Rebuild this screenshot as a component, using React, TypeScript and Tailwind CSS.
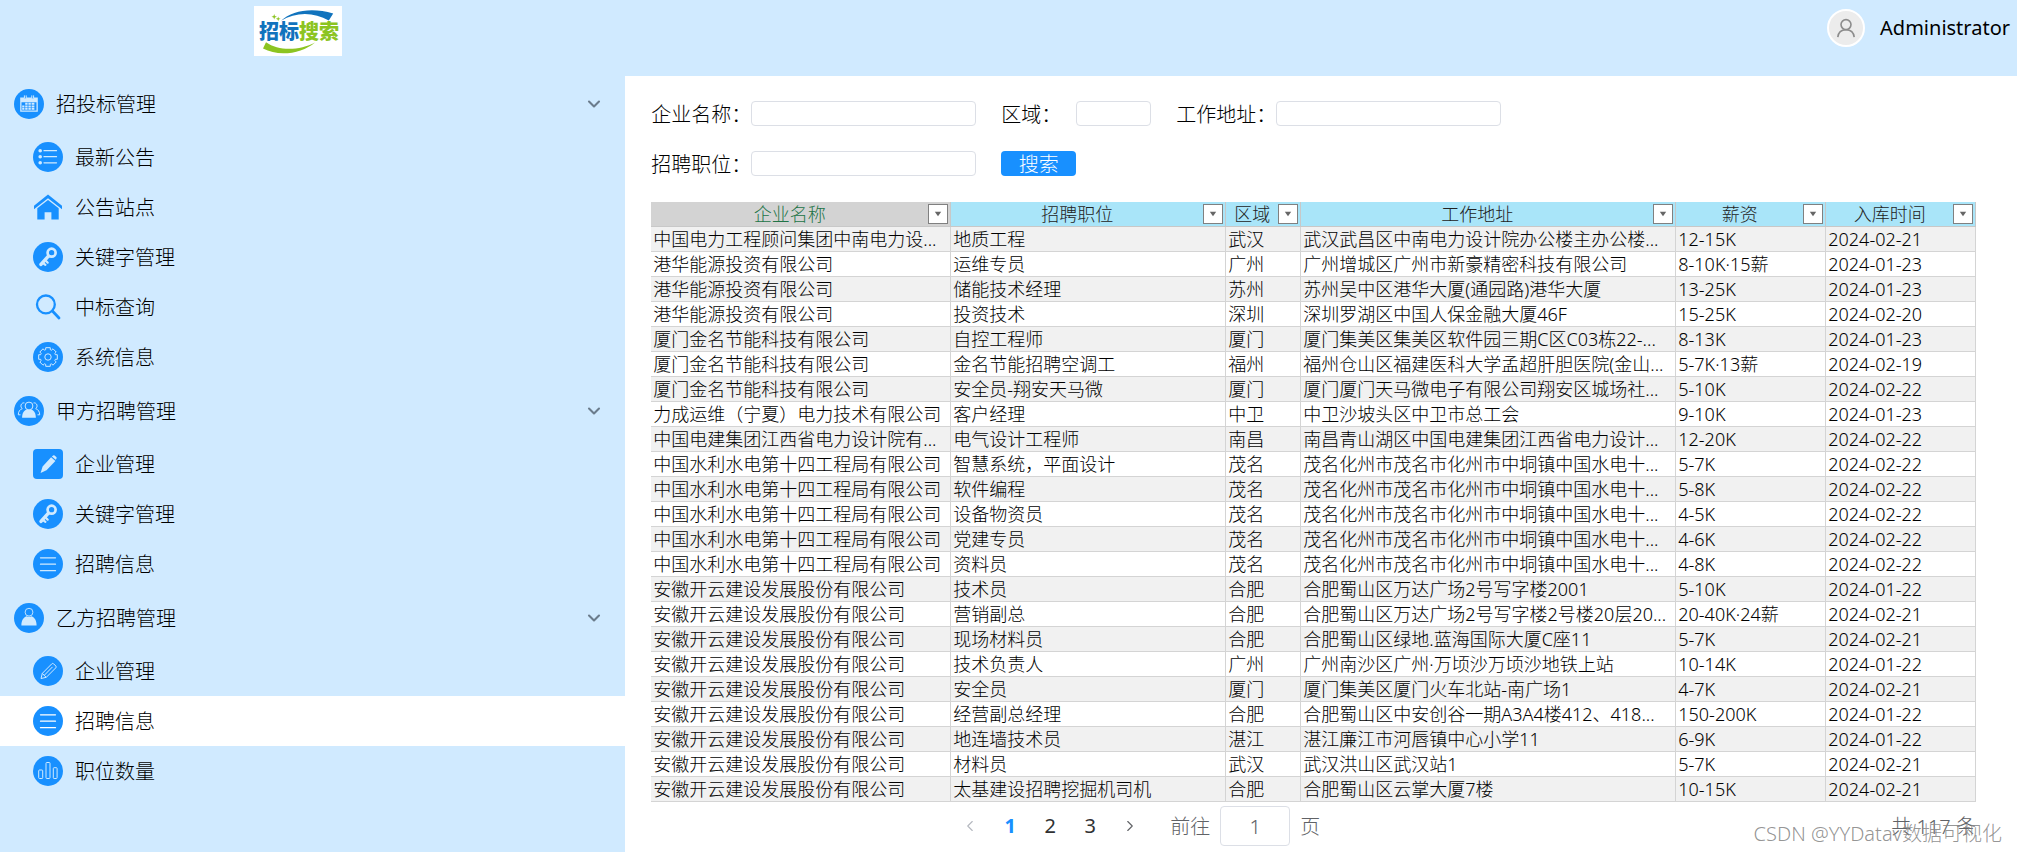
import { useState } from 'react'
import { ChevronDown, ChevronLeft, ChevronRight } from 'lucide-react'
import clsx from 'clsx'

type IconName =
  | 'calendar'
  | 'list'
  | 'home'
  | 'key'
  | 'search'
  | 'gear'
  | 'group'
  | 'edit'
  | 'lines'
  | 'user'
  | 'pencil'
  | 'chart'

interface MenuEntry {
  id: string
  label: string
  icon: IconName
}

interface MenuGroup extends MenuEntry {
  items: MenuEntry[]
}

const MENU: MenuGroup[] = [
  {
    id: 'bidding',
    label: '招投标管理',
    icon: 'calendar',
    items: [
      { id: 'notice', label: '最新公告', icon: 'list' },
      { id: 'site', label: '公告站点', icon: 'home' },
      { id: 'keyword', label: '关键字管理', icon: 'key' },
      { id: 'winner', label: '中标查询', icon: 'search' },
      { id: 'system', label: '系统信息', icon: 'gear' },
    ],
  },
  {
    id: 'party-a',
    label: '甲方招聘管理',
    icon: 'group',
    items: [
      { id: 'a-company', label: '企业管理', icon: 'edit' },
      { id: 'a-keyword', label: '关键字管理', icon: 'key' },
      { id: 'a-jobs', label: '招聘信息', icon: 'lines' },
    ],
  },
  {
    id: 'party-b',
    label: '乙方招聘管理',
    icon: 'user',
    items: [
      { id: 'b-company', label: '企业管理', icon: 'pencil' },
      { id: 'b-jobs', label: '招聘信息', icon: 'lines' },
      { id: 'b-count', label: '职位数量', icon: 'chart' },
    ],
  },
]

const COLUMNS = [
  { label: '企业名称', width: 'w-[300px]' },
  { label: '招聘职位', width: 'w-[275px]' },
  { label: '区域', width: 'w-[75px]' },
  { label: '工作地址', width: 'w-[375px]' },
  { label: '薪资', width: 'w-[150px]' },
  { label: '入库时间', width: 'w-[150px]' },
]

const ROWS = [
  ['中国电力工程顾问集团中南电力设...', '地质工程', '武汉', '武汉武昌区中南电力设计院办公楼主办公楼...', '12-15K', '2024-02-21'],
  ['港华能源投资有限公司', '运维专员', '广州', '广州增城区广州市新豪精密科技有限公司', '8-10K·15薪', '2024-01-23'],
  ['港华能源投资有限公司', '储能技术经理', '苏州', '苏州吴中区港华大厦(通园路)港华大厦', '13-25K', '2024-01-23'],
  ['港华能源投资有限公司', '投资技术', '深圳', '深圳罗湖区中国人保金融大厦46F', '15-25K', '2024-02-20'],
  ['厦门金名节能科技有限公司', '自控工程师', '厦门', '厦门集美区集美区软件园三期C区C03栋22-...', '8-13K', '2024-01-23'],
  ['厦门金名节能科技有限公司', '金名节能招聘空调工', '福州', '福州仓山区福建医科大学孟超肝胆医院(金山...', '5-7K·13薪', '2024-02-19'],
  ['厦门金名节能科技有限公司', '安全员-翔安天马微', '厦门', '厦门厦门天马微电子有限公司翔安区城场社...', '5-10K', '2024-02-22'],
  ['力成运维（宁夏）电力技术有限公司', '客户经理', '中卫', '中卫沙坡头区中卫市总工会', '9-10K', '2024-01-23'],
  ['中国电建集团江西省电力设计院有...', '电气设计工程师', '南昌', '南昌青山湖区中国电建集团江西省电力设计...', '12-20K', '2024-02-22'],
  ['中国水利水电第十四工程局有限公司', '智慧系统，平面设计', '茂名', '茂名化州市茂名市化州市中垌镇中国水电十...', '5-7K', '2024-02-22'],
  ['中国水利水电第十四工程局有限公司', '软件编程', '茂名', '茂名化州市茂名市化州市中垌镇中国水电十...', '5-8K', '2024-02-22'],
  ['中国水利水电第十四工程局有限公司', '设备物资员', '茂名', '茂名化州市茂名市化州市中垌镇中国水电十...', '4-5K', '2024-02-22'],
  ['中国水利水电第十四工程局有限公司', '党建专员', '茂名', '茂名化州市茂名市化州市中垌镇中国水电十...', '4-6K', '2024-02-22'],
  ['中国水利水电第十四工程局有限公司', '资料员', '茂名', '茂名化州市茂名市化州市中垌镇中国水电十...', '4-8K', '2024-02-22'],
  ['安徽开云建设发展股份有限公司', '技术员', '合肥', '合肥蜀山区万达广场2号写字楼2001', '5-10K', '2024-01-22'],
  ['安徽开云建设发展股份有限公司', '营销副总', '合肥', '合肥蜀山区万达广场2号写字楼2号楼20层20...', '20-40K·24薪', '2024-02-21'],
  ['安徽开云建设发展股份有限公司', '现场材料员', '合肥', '合肥蜀山区绿地.蓝海国际大厦C座11', '5-7K', '2024-02-21'],
  ['安徽开云建设发展股份有限公司', '技术负责人', '广州', '广州南沙区广州·万顷沙万顷沙地铁上站', '10-14K', '2024-01-22'],
  ['安徽开云建设发展股份有限公司', '安全员', '厦门', '厦门集美区厦门火车北站-南广场1', '4-7K', '2024-02-21'],
  ['安徽开云建设发展股份有限公司', '经营副总经理', '合肥', '合肥蜀山区中安创谷一期A3A4楼412、418...', '150-200K', '2024-01-22'],
  ['安徽开云建设发展股份有限公司', '地连墙技术员', '湛江', '湛江廉江市河唇镇中心小学11', '6-9K', '2024-01-22'],
  ['安徽开云建设发展股份有限公司', '材料员', '武汉', '武汉洪山区武汉站1', '5-7K', '2024-02-21'],
  ['安徽开云建设发展股份有限公司', '太基建设招聘挖掘机司机', '合肥', '合肥蜀山区云掌大厦7楼', '10-15K', '2024-02-21'],
]

// Outline of a cog with eight rounded teeth, centred in a 30x30 box
function gearPath() {
  const points: string[] = []
  for (let i = 0; i < 8; i++) {
    const base = (i * Math.PI) / 4
    const steps: [number, number][] = [
      [-0.24, 9.6],
      [0.24, 9.6],
      [0.3, 7.7],
      [0.48, 7.7],
    ]
    steps.forEach(([offset, r]) => {
      const x = 15 + r * Math.sin(base + offset)
      const y = 15 - r * Math.cos(base + offset)
      points.push(`${x.toFixed(2)} ${y.toFixed(2)}`)
    })
  }
  return `M${points.join('L')}Z`
}

function Glyph({ name }: { name: IconName }) {
  switch (name) {
    case 'calendar':
      return (
        <>
          <path
            fillRule="evenodd"
            fill="currentColor"
            d="M6.2 8.6h17.6v14.2H6.2zM7.5 13.2v8.3h15v-8.3z"
          />
          <path d="M10.4 6.4v2.8q.9 1.2 1.8 0V6.4M17.8 6.4v2.8q.9 1.2 1.8 0V6.4" fill="#1890ff" stroke="currentColor" />
          <path
            fill="currentColor"
            d="M11.2 13.8h2.4v2h-2.4zM14.4 13.8h2.4v2h-2.4zM17.6 13.8h2.8v2h-2.8zM8.2 16.4h2.2v2H8.2zM11.2 16.4h2.4v2h-2.4zM14.4 16.4h2.4v2h-2.4zM17.6 16.4h2.8v2h-2.8zM8.2 19h2.2v1.8H8.2zM11.2 19h2.4v1.8h-2.4zM14.4 19h2.4v1.8h-2.4zM17.6 19h2.8v1.8h-2.8z"
          />
        </>
      )
    case 'list':
      return (
        <>
          <path d="M11 8.7h12.5M11 14.7h12.5M11 20.8h12.5" stroke="currentColor" strokeWidth="1.3" strokeLinecap="round" />
          <g fill="currentColor">
            <circle cx="7.2" cy="8.7" r="1.8" />
            <circle cx="7.2" cy="14.7" r="1.8" />
            <circle cx="7.2" cy="20.8" r="1.8" />
          </g>
        </>
      )
    case 'home':
      return (
        <g fill="#1890ff">
          <path d="M15 2.6L29 13.700v3.600L15 6.300 1 17.300v-3.600z" />
          <path d="M15 8.1l10.7 8.2v11.3h-7.3v-7.4h-6.8v7.4H4.3V16.3z" />
        </g>
      )
    case 'key':
      return (
        <g fill="none" stroke="currentColor">
          <circle cx="18.6" cy="10.7" r="4" strokeWidth="2.7" />
          <path d="M15.4 14.1L8 22.4" strokeWidth="3.4" strokeLinecap="round" />
          <path d="M9.8 20.8l2.6 2.1M12.8 18.7l1.9 2" strokeWidth="2.2" strokeLinecap="round" />
        </g>
      )
    case 'search':
      return (
        <g fill="none" stroke="#1890ff" strokeWidth="2.3" strokeLinecap="round">
          <circle cx="12.9" cy="12.4" r="8.9" />
          <path d="M19.4 19.1l6.600 6.800" strokeWidth="2.8" />
        </g>
      )
    case 'gear':
      return (
        <g fill="none" stroke="currentColor" strokeWidth="1" strokeLinejoin="round">
          <path d={gearPath()} />
          <circle cx="15" cy="15" r="3.2" />
        </g>
      )
    case 'group':
      return (
        <>
          <g fill="none" stroke="currentColor" strokeWidth="1">
            <circle cx="15" cy="10" r="3.9" fill="#1890ff" />
            <path d="M10.4 6.9c-3.4-.6-4.7 4-2.1 5.7-2.6.9-4 3.2-4 6.2h2.2M19.6 6.9c3.4-.6 4.7 4 2.1 5.7 2.6.9 4 3.2 4 6.2h-2.2" />
          </g>
          <path d="M8.1 21.8c0-4.6 1.8-7.6 5-8.3q1.9 1 3.8 0c3.2.7 5 3.7 5 8.3z" fill="currentColor" />
        </>
      )
    case 'edit':
      return (
        <path
          d="M18.1 8.3l4.3 3.6-8.9 9.4-5.9 2.6 2-6.3zM18.9 7.5l1.2-1q.7-.5 1.5.1l1.7 1.5q.8.8.1 1.6l-.7 1.1z"
          fill="currentColor"
        />
      )
    case 'lines':
      return (
        <path d="M7.5 8.8h15M7.5 15.2h15M7.5 21.7h15" stroke="currentColor" strokeWidth="1.3" strokeLinecap="round" />
      )
    case 'user':
      return (
        <>
          <circle cx="15" cy="9.2" r="3.9" fill="none" stroke="currentColor" strokeWidth="0.9" />
          <path d="M7.4 22.6c0-5 1.8-8.2 5.2-9.4q2.4 1.2 4.8 0c3.4 1.2 5.2 4.4 5.2 9.4z" fill="currentColor" />
        </>
      )
    case 'pencil':
      return (
        <g fill="none" stroke="currentColor" strokeWidth="1" strokeLinejoin="round">
          <path d="M8 22.5l1.3-5.1 9.5-9.6q.8-.8 1.8 0l2.2 2.2q.8.9 0 1.8l-9.5 9.5z" />
          <path d="M11.3 19.3l8.2-8.4M9.3 17.4l3.9 3.9" />
        </g>
      )
    case 'chart':
      return (
        <g fill="none" stroke="currentColor" strokeWidth="1">
          <rect x="5.7" y="14" width="4" height="8.5" rx="0.8" />
          <rect x="13" y="6.5" width="4" height="16" rx="0.8" />
          <rect x="20.3" y="11.7" width="3.8" height="10.8" rx="0.8" />
        </g>
      )
  }
}

function MenuIcon({ name, selected = false }: { name: IconName; selected?: boolean }) {
  const bare = name === 'home' || name === 'search'

  return (
    <svg
      viewBox="0 0 30 30"
      fill="none"
      className={clsx('size-[30px] shrink-0', selected ? 'text-white' : 'text-[#d0eaff]')}
      aria-hidden="true"
    >
      {!bare && <rect width="30" height="30" rx={name === 'edit' ? 4 : 15} fill="#1890ff" />}
      <Glyph name={name} />
    </svg>
  )
}

function Logo() {
  return (
    <svg viewBox="0 0 88 50" className="h-[50px] w-[88px] bg-white" role="img" aria-label="招标搜索">
      <path d="M27 14.8C38 4.5 58 1 79.2 7.6l-4.4 7C60 5.8 42 5.6 27 14.8z" fill="#1173bd" />
      <path d="M12 36.2C25 45.5 46 44.5 61 36.4 48 47.5 25 51 9 42.6z" fill="#8cc421" />
      <path d="M20.2 8l.7 2 2 .7-2 .7-.7 2-.7-2-2-.7 2-.7zM24.2 10.4l.6 1.8 1.8.6-1.8.6-.6 1.8-.6-1.8-1.8-.6 1.8-.6z" fill="#8cc421" />
      <text x="5" y="33" fontSize="20" fontWeight="900">
        <tspan fill="#1173bd">招标</tspan>
        <tspan fill="#8cc421">搜索</tspan>
      </text>
    </svg>
  )
}

function Header() {
  return (
    <header className="flex h-[76px] items-start justify-between bg-[#d0eaff]">
      <div className="flex w-[31%] justify-center pt-1.5 pr-[29px]">
        <Logo />
      </div>
      <div className="flex items-center gap-[15px] pt-[9px] pr-[7px]">
        <span className="flex size-[38px] items-center justify-center rounded-full border-2 border-white bg-[#ececec]">
          <svg viewBox="0 0 20 20" className="size-5 fill-none stroke-[#8c8c8c] stroke-[1.6]" aria-hidden="true">
            <circle cx="10" cy="6.6" r="5" />
            <path d="M1.8 19.2c.5-4.6 3.6-7.4 8.2-7.4s7.700 2.800 8.200 7.400" />
          </svg>
        </span>
        <span className="text-xl font-normal text-black">Administrator</span>
      </div>
    </header>
  )
}

function Sidebar() {
  const [active, setActive] = useState('b-jobs')
  const [closed, setClosed] = useState<string[]>([])

  const toggle = (id: string) =>
    setClosed((prev) => (prev.includes(id) ? prev.filter((c) => c !== id) : [...prev, id]))

  return (
    <nav className="w-[31%] shrink-0 bg-[#d0eaff] text-xl text-black">
      {MENU.map((group) => (
        <section key={group.id} className="pb-px">
          <button
            type="button"
            onClick={() => toggle(group.id)}
            className="flex h-14 w-full items-center gap-3 pr-[21px] pl-3.5 text-left"
          >
            <MenuIcon name={group.icon} />
            <span className="flex-1 pt-0.5">{group.label}</span>
            <ChevronDown className="size-5 stroke-[2.5] text-[#6b7c8c]" />
          </button>
          {!closed.includes(group.id) &&
            group.items.map((item) => (
              <button
                key={item.id}
                type="button"
                onClick={() => setActive(item.id)}
                className={clsx(
                  'flex h-[50px] w-full items-center gap-3 pl-[33px] text-left',
                  active === item.id && 'bg-white'
                )}
              >
                <MenuIcon name={item.icon} selected={active === item.id} />
                <span className="pt-0.5">{item.label}</span>
              </button>
            ))}
        </section>
      ))}
    </nav>
  )
}

function Field({ id, label, short = false }: { id: string; label: string; short?: boolean }) {
  return (
    <div className="flex h-[25px] items-center">
      <label htmlFor={id} className={clsx('pt-0.5', short ? 'w-[75px]' : 'w-[100px]')}>
        {label}
      </label>
      <input
        id={id}
        type="text"
        className={clsx(
          'h-full rounded border border-[#dcdfe6] bg-white px-2 text-base outline-none focus:border-[#1890ff]',
          short ? 'w-[75px]' : 'w-[225px]'
        )}
      />
    </div>
  )
}

function SearchForm() {
  return (
    <form className="flex flex-col gap-[25px] text-xl whitespace-nowrap text-black" onSubmit={(e) => e.preventDefault()}>
      <div className="flex gap-[25px]">
        <Field id="company" label="企业名称：" />
        <Field id="area" label="区域：" short />
        <Field id="address" label="工作地址：" />
      </div>
      <div className="flex gap-[25px]">
        <Field id="position" label="招聘职位：" />
        <button type="submit" className="flex h-[25px] w-[75px] items-center justify-center rounded bg-[#1890ff] pt-0.5 text-white">
          搜索
        </button>
      </div>
    </form>
  )
}

function JobTable() {
  return (
    <table className="mt-[26px] w-full table-fixed border-separate border-spacing-0 text-lg leading-6 whitespace-nowrap">
      <thead>
        <tr>
          {COLUMNS.map((col, i) => (
            <th
              key={col.label}
              scope="col"
              className={clsx(
                col.width,
                'h-[25px] border-r border-b border-[#c8c8c8] p-0 font-light',
                i === 0 ? 'bg-[#d3d3d3] text-[#217346]' : 'bg-[#a9e5f9] text-[#222222]'
              )}
            >
              <div className="flex h-6 items-center pr-0.5">
                <span className="flex-1">{col.label}</span>
                <button
                  type="button"
                  aria-label={`筛选${col.label}`}
                  className="flex size-5 items-center justify-center border border-[#808080] bg-white"
                >
                  <svg viewBox="0 0 8 6" className="h-1.5 w-2 fill-[#666666]" aria-hidden="true">
                    <path d="M.8 .8h6.400L4 5.200z" />
                  </svg>
                </button>
              </div>
            </th>
          ))}
        </tr>
      </thead>
      <tbody>
        {ROWS.map((row, i) => (
          <tr key={i} className="odd:bg-[#f1f1f1]">
            {row.map((cell, j) => (
              <td key={j} className="h-[25px] overflow-hidden border-r border-b border-[#d4d4d4] px-0.5 py-0 text-black">
                {cell}
              </td>
            ))}
          </tr>
        ))}
      </tbody>
    </table>
  )
}

function Pagination() {
  const [page, setPage] = useState(1)

  return (
    <div className="mt-1 flex h-10 items-center pl-[299px] text-xl text-[#606266]">
      <button
        type="button"
        aria-label="上一页"
        disabled={page === 1}
        onClick={() => setPage(page - 1)}
        className="flex w-10 justify-center disabled:text-[#b4b8bf]"
      >
        <ChevronLeft className="size-[18px] stroke-[1.5]" />
      </button>
      {[1, 2, 3].map((n) => (
        <button
          key={n}
          type="button"
          onClick={() => setPage(n)}
          className={clsx('w-10 text-center', n === page ? 'font-bold text-[#1890ff]' : 'font-normal text-[#303133]')}
        >
          {n}
        </button>
      ))}
      <button
        type="button"
        aria-label="下一页"
        disabled={page === 3}
        onClick={() => setPage(page + 1)}
        className="flex w-10 justify-center disabled:text-[#b4b8bf]"
      >
        <ChevronRight className="size-[18px] stroke-[1.5]" />
      </button>
      <label htmlFor="goto" className="ml-5 pt-0.5">
        前往
      </label>
      <input
        id="goto"
        type="text"
        value={page}
        onChange={(e) => setPage(Math.min(3, Math.max(1, Number(e.target.value) || 1)))}
        className="mx-2.5 h-10 w-[70px] rounded border border-[#dcdfe6] bg-white text-center outline-none"
      />
      <span className="pt-0.5">页</span>
      <span className="ml-auto pt-0.5">共 117 条</span>
    </div>
  )
}

export default function App() {
  return (
    <div className="relative flex min-h-screen flex-col bg-white font-['Noto_Sans','Noto_Sans_CJK_SC',sans-serif] font-light">
      <Header />
      <div className="flex flex-1">
        <Sidebar />
        <main className="min-w-0 flex-1 pt-[25px] pr-[41px] pl-[26px]">
          <SearchForm />
          <JobTable />
          <Pagination />
        </main>
      </div>
      <div className="pointer-events-none absolute right-[15px] bottom-1 text-xl text-[#888888]/90">
        CSDN @YYDatav数据可视化
      </div>
    </div>
  )
}
